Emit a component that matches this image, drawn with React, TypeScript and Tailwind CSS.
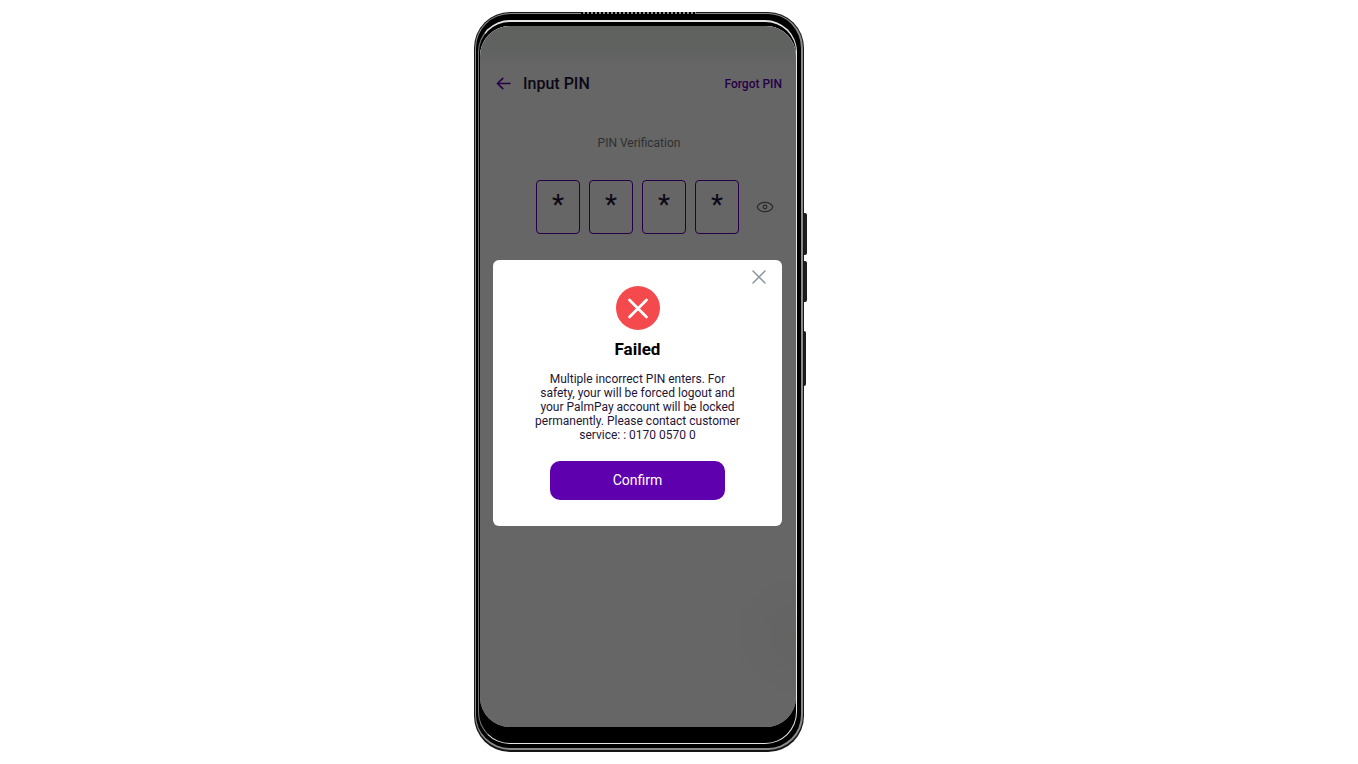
import { useState } from "react";
import type { ReactNode } from "react";

function BackArrow() {
  return (
    <svg width="15" height="14" viewBox="0 0 15 14" fill="none" stroke="#5f00af" strokeWidth="1.6" strokeLinecap="round" strokeLinejoin="round" aria-hidden="true">
      <path d="M14 6.500H1.600M6.800 1.300 1.400 6.500 6.800 11.700" />
    </svg>
  );
}

function Eye() {
  return (
    <svg width="18" height="12" viewBox="0 0 18 12" fill="none" stroke="#6b6b6b" strokeWidth="1.2" aria-hidden="true">
      <path d="M1.200 6C2.400 2.900 5.400 1.300 9 1.300S15.600 2.900 16.800 6C15.600 9.100 12.600 10.700 9 10.700S2.400 9.100 1.200 6Z" />
      <circle cx="9" cy="6" r="1.800" />
    </svg>
  );
}

function Cross() {
  return (
    <svg width="14" height="14" viewBox="0 0 14 14" stroke="#8a949e" strokeWidth="1.5" strokeLinecap="round" aria-hidden="true">
      <path d="M1 1 13 13M13 1 1 13" />
    </svg>
  );
}

function FailedMark() {
  return (
    <svg width="44" height="44" viewBox="0 0 44 44" aria-hidden="true">
      <circle cx="22" cy="22" r="22" fill="#f54a4d" />
      <path d="M13.500 14 30.500 31M30.500 14 13.500 31" stroke="#fff" strokeWidth="2.700" strokeLinecap="round" />
    </svg>
  );
}

function Phone({ children }: { children: ReactNode }) {
  return (
    <div className="relative w-[330px] shrink-0 rounded-[36px] bg-[#161616] p-px pb-0.5">
      <div className="absolute top-0 left-[107px] h-0.5 w-[115px] bg-[repeating-linear-gradient(90deg,#000_0_2px,#8a8a8a_2px_4px)]" />
      <div className="absolute top-[201px] -right-[3px] h-[42px] w-[3px] rounded-r-xs bg-[#1c1c1c]" />
      <div className="absolute top-[249px] -right-[3px] h-[41px] w-[3px] rounded-r-xs bg-[#1c1c1c]" />
      <div className="absolute top-[319px] -right-[2px] h-[55px] w-0.5 rounded-r-xs bg-[#1c1c1c]" />
      <div className="rounded-[35px] border border-r-2 border-b-2 border-[#8a8a8a] bg-black pt-1.5 pr-1 pb-1 pl-0.5">
        <div className="rounded-[32px] border border-t-2 border-[#e4e4e4] border-l-[#777] bg-black pt-1 pb-4 pl-px">
          {children}
        </div>
      </div>
    </div>
  );
}

const digits = ["First", "Second", "Third", "Fourth"];

export default function App() {
  const [pin, setPin] = useState(["*", "*", "*", "*"]);

  return (
    <main className="flex min-h-screen items-start justify-center bg-white pt-3 pr-20 font-[Roboto,sans-serif]">
      <Phone>
        <div className="relative h-[701px] overflow-hidden rounded-[30px] bg-[radial-gradient(circle_at_100%_87%,#f7faf6_0,#fafcfa_40px,#ffffff_75px)]">
          <div className="h-full bg-[linear-gradient(180deg,#f0f5f0_0,#f0f4f2_24px,transparent_44px)] pt-[46px] pr-3.5 pl-4">
            <header className="flex h-6 items-center justify-between">
              <div className="flex items-center gap-3">
                <button type="button" aria-label="Back">
                  <BackArrow />
                </button>
                <h1 className="text-base font-medium text-[#1e1537]">Input PIN</h1>
              </div>
              <a href="#forgot" className="text-xs font-medium text-[#5f00af]">
                Forgot PIN
              </a>
            </header>
            <p className="mt-[39px] text-center text-xs leading-4 text-[#757b7b]">PIN Verification</p>
            <div className="mt-[29px] flex items-center justify-end gap-[9px] pr-2">
              {digits.map((name, i) => (
                <input
                  key={name}
                  aria-label={`${name} digit`}
                  maxLength={1}
                  value={pin[i]}
                  onChange={(e) => setPin(pin.map((d, n) => (n === i ? e.target.value : d)))}
                  className="h-[54px] w-11 rounded border border-[#5f00af] pb-1.5 text-center text-[28px] text-[#1e1537]"
                />
              ))}
              <button type="button" aria-label="Show PIN" className="ml-2">
                <Eye />
              </button>
            </div>
          </div>

          <div className="absolute inset-0 flex items-center bg-black/60 pt-8 pr-3.5 pl-[13px]">
            <section role="dialog" aria-labelledby="dialog-title" className="relative flex w-full flex-col items-center rounded-md bg-white px-8 pt-[26px] pb-[26px]">
              <button type="button" aria-label="Close" className="absolute top-2.5 right-4">
                <Cross />
              </button>
              <FailedMark />
              <h2 id="dialog-title" className="mt-[7px] text-[17px] leading-6 font-bold text-black">
                Failed
              </h2>
              <p className="mt-[11px] text-center text-xs leading-[14px] text-[#1e1537]">
                Multiple incorrect PIN enters. For
                <br />
                safety, your will be forced logout and
                <br />
                your PalmPay account will be locked
                <br />
                permanently. Please contact customer
                <br />
                service: : 0170 0570 0
              </p>
              <button type="button" className="mt-[19px] h-[39px] w-[175px] rounded-[10px] bg-[#5f00af] text-sm text-white">
                Confirm
              </button>
            </section>
          </div>
        </div>
      </Phone>
    </main>
  );
}
